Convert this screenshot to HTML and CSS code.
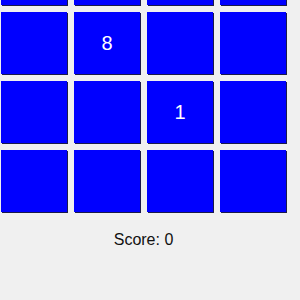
FILE: index.html
```html
<!DOCTYPE html>
<html>
<head>
    <title>2048</title>
    <link rel="stylesheet" href="styles.css">
</head>
<body>
    <div class="game">
        <div class="board">
            <div class="tile"></div>
            <div class="tile"></div>
            <div class="tile"></div>
            <div class="tile"></div>

            <div class="tile"></div>
            <div class="tile">8</div>
            <div class="tile"></div>
            <div class="tile"></div>

            <div class="tile"></div>
            <div class="tile"></div>
            <div class="tile">1</div>
            <div class="tile"></div>

            <div class="tile"></div>
            <div class="tile"></div>
            <div class="tile"></div>
            <div class="tile"></div>
        </div>
        <div class="score">Score: 0</div>
    </div>
</body>
</html>
```

FILE: styles.css
```css
body {
    font-family: "Liberation Sans", Arial, sans-serif;
    background-color: #f0f0f0;
    margin: 0;
    padding: 0;
}

.game {
    width: 287px;
    margin-top: -57px;
    text-align: center;
}

.board {
    display: grid;
    grid-template-columns: repeat(4, 66px);
    grid-auto-rows: 62px;
    gap: 7px;
    justify-content: center;
}

.tile {
    background-color: #0000ff;
    box-shadow: 1px 1px 0 #1a1a4a;
    color: #ffffff;
    font-size: 20px;
    display: flex;
    align-items: center;
    justify-content: center;
}

.score {
    margin-top: 19px;
    font-size: 16px;
    color: #111111;
}
```
